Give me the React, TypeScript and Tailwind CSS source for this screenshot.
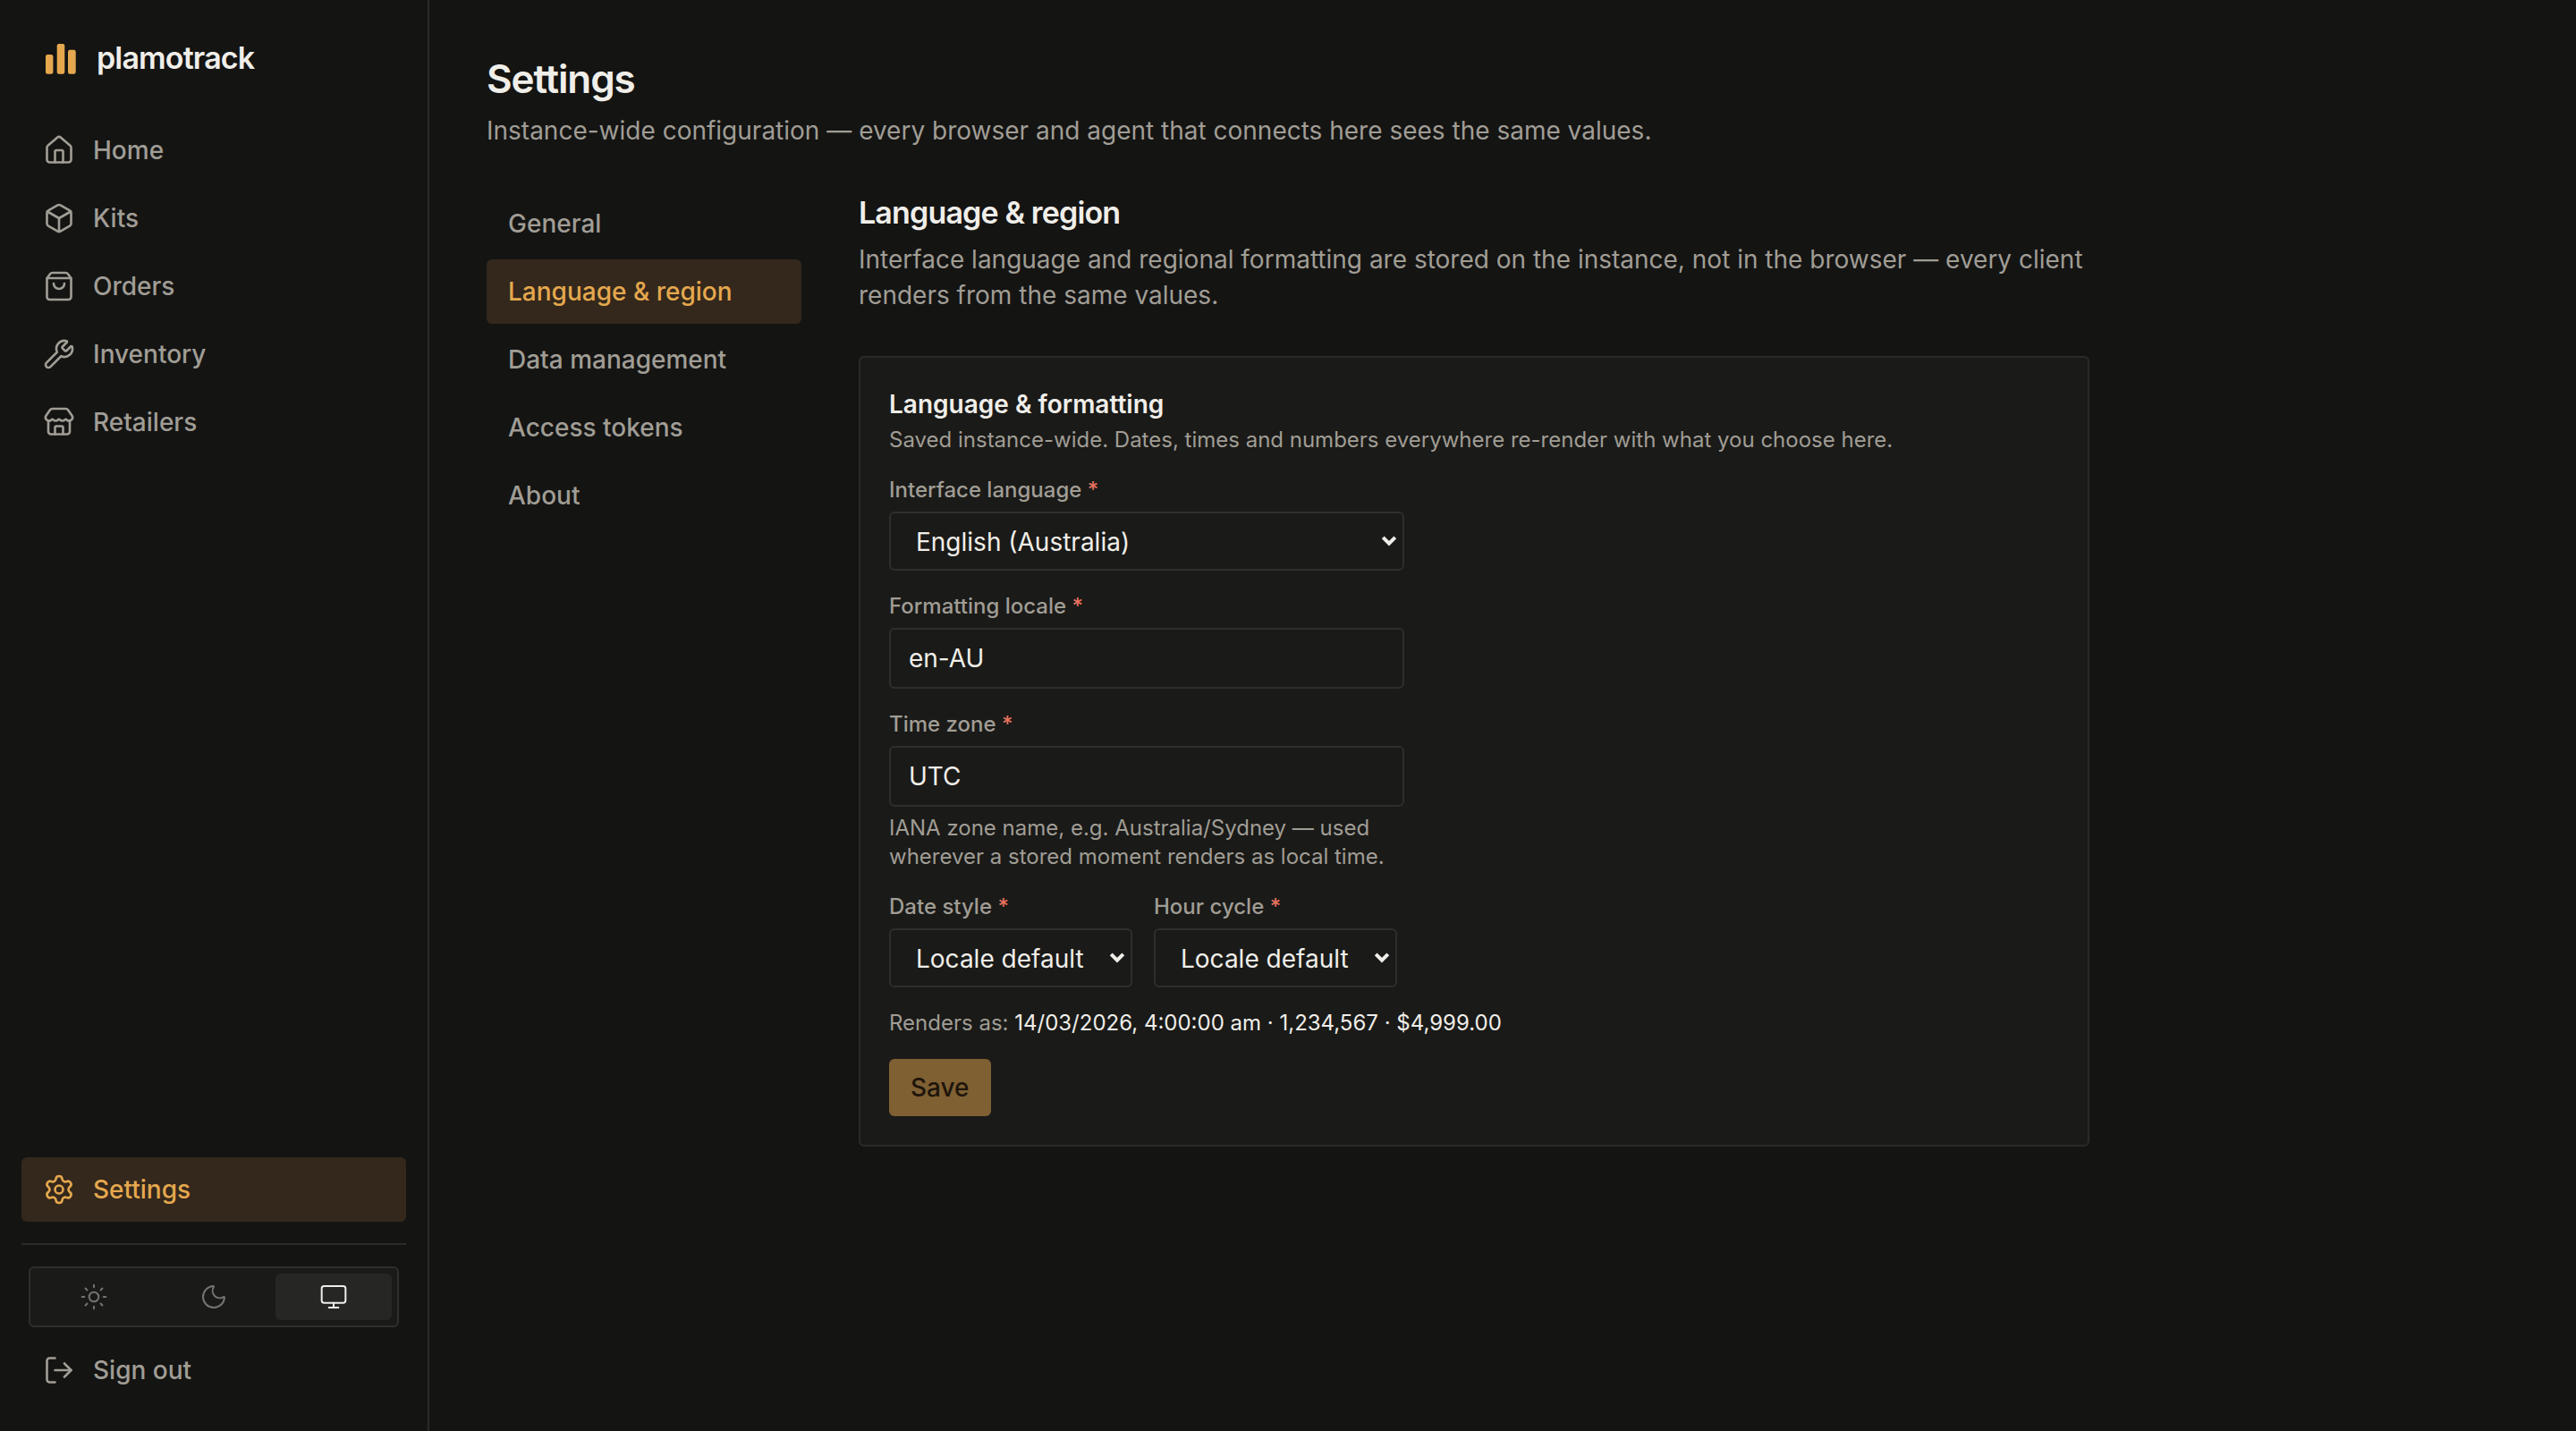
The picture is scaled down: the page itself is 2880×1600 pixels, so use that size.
import { House, Box, ShoppingBag, Wrench, Store, Settings, Sun, Moon, Monitor, LogOut } from "lucide-react";

const mainNav = [
  { label: "Home", Icon: House },
  { label: "Kits", Icon: Box },
  { label: "Orders", Icon: ShoppingBag },
  { label: "Inventory", Icon: Wrench },
  { label: "Retailers", Icon: Store },
];

const sections = ["General", "Language & region", "Data management", "Access tokens", "About"];

function NavItem({ label, Icon, active }: { label: string; Icon: typeof House; active?: boolean }) {
  return (
    <a
      className={
        active
          ? "flex h-9 items-center gap-2.5 rounded-[3px] bg-[#34281c] px-3 text-sm font-medium text-[#e5a84e]"
          : "flex h-9 items-center gap-2.5 rounded-[3px] px-3 text-sm font-medium text-[#a09d95]"
      }
    >
      <Icon size={18} strokeWidth={1.75} />
      <span>{label}</span>
    </a>
  );
}

function Label({ children }: { children: string }) {
  return (
    <label className="mb-1 block text-xs leading-4 font-medium text-[#a09d95]">
      {children} <span className="text-[#e5705f]">*</span>
    </label>
  );
}

function NativeSelect({ value, className }: { value: string; className: string }) {
  return (
    <div className={`relative ${className}`}>
      <select
        defaultValue={value}
        className="h-[33px] w-full appearance-none rounded-[3px] border border-[#2e2e2b] bg-[#1a1a18] pt-px pr-[26px] pl-[14px] text-sm text-[#f0eee9]"
      >
        <option>{value}</option>
      </select>
      <svg
        width="10"
        height="7"
        viewBox="0 0 10 7"
        fill="none"
        stroke="#f0eee9"
        strokeWidth="2"
        className="pointer-events-none absolute top-[13px] right-[3.5px]"
      >
        <polyline points="1.6,1.4 5,4.8 8.4,1.4" />
      </svg>
    </div>
  );
}

export default function App() {
  return (
    <div className="flex h-[800px] w-[1440px] bg-[#141413] font-['Inter',sans-serif] [zoom:2]">
      <aside className="flex w-60 shrink-0 flex-col border-r border-[#2a2a28] px-3 pb-4">
        <div className="flex h-[66px] items-center gap-2.5 pl-3">
          <svg width="20" height="18" viewBox="0 0 40 36" className="fill-[#e5a84e]">
            <rect x="3" y="13" width="8.4" height="21.8" rx="2.2" />
            <rect x="15.7" y="1" width="8.6" height="33.8" rx="2.2" />
            <rect x="28" y="7.8" width="8.7" height="27" rx="2.2" />
          </svg>
          <span className="mb-0.5 text-[17px] font-semibold tracking-tight text-[#f0eee9]">plamotrack</span>
        </div>
        <nav className="flex flex-col gap-0.5">
          {mainNav.map((n) => (
            <NavItem key={n.label} label={n.label} Icon={n.Icon} />
          ))}
        </nav>
        <div className="mt-auto">
          <NavItem label="Settings" Icon={Settings} active />
          <div className="my-3 h-px bg-[#2a2a28]" />
          <div className="mx-1 flex h-[34px] gap-0.5 rounded-[3px] border border-[#2e2e2b] bg-[#1a1a18] p-[3px]">
            <button className="flex flex-1 items-center justify-center rounded-[3px] text-[#757470]">
              <Sun size={16} strokeWidth={1.5} />
            </button>
            <button className="flex flex-1 items-center justify-center rounded-[3px] text-[#757470]">
              <Moon size={16} strokeWidth={1.5} />
            </button>
            <button className="flex flex-1 items-center justify-center rounded-[3px] bg-[#262624] text-[#f0eee9]">
              <Monitor size={16} strokeWidth={1.5} />
            </button>
          </div>
          <div className="mt-1.5">
            <NavItem label="Sign out" Icon={LogOut} />
          </div>
        </div>
      </aside>

      <main className="flex-1 pl-8 pt-7">
        <div className="w-[896px]">
          <h1 className="text-[22px] leading-8 font-semibold tracking-tight text-[#f0eee9]">Settings</h1>
          <p className="mt-[3px] text-sm text-[#a09d95]">
            Instance-wide configuration — every browser and agent that connects here sees the same values.
          </p>
          <div className="mt-[22px] flex gap-8">
            <nav className="flex w-44 shrink-0 flex-col gap-0.5 pt-[2px]">
              {sections.map((s) => (
                <a
                  key={s}
                  className={
                    s === "Language & region"
                      ? "flex h-9 items-center rounded-[3px] bg-[#34281c] px-3 text-sm font-medium text-[#e5a84e]"
                      : "flex h-9 items-center rounded-[3px] px-3 text-sm font-medium text-[#a09d95]"
                  }
                >
                  {s}
                </a>
              ))}
            </nav>
            <section className="min-w-0 flex-1">
              <h2 className="text-[17px] leading-7 font-semibold tracking-tight text-[#f0eee9]">Language &amp; region</h2>
              <p className="mt-0.5 text-sm text-[#a09d95]">
                Interface language and regional formatting are stored on the instance, not in the browser — every client renders from the same values.
              </p>
              <form className="mt-6 flex flex-col gap-3 rounded-[3px] border border-[#2a2a28] bg-[#1a1a18] p-4">
                <div>
                  <h3 className="text-sm leading-5 font-semibold text-[#f0eee9]">Language &amp; formatting</h3>
                  <p className="mt-0.5 text-xs leading-4 text-[#a09d95]">
                    Saved instance-wide. Dates, times and numbers everywhere re-render with what you choose here.
                  </p>
                </div>
                <div>
                  <Label>Interface language</Label>
                  <NativeSelect value="English (Australia)" className="w-72" />
                </div>
                <div>
                  <Label>Formatting locale</Label>
                  <input
                    defaultValue="en-AU"
                    className="h-[34px] w-72 rounded-[3px] border border-[#2e2e2b] bg-[#1a1a18] px-2.5 text-sm text-[#f0eee9] outline-none"
                  />
                </div>
                <div>
                  <Label>Time zone</Label>
                  <input
                    defaultValue="UTC"
                    className="h-[34px] w-72 rounded-[3px] border border-[#2e2e2b] bg-[#1a1a18] px-2.5 text-sm text-[#f0eee9] outline-none"
                  />
                  <p className="mt-1 w-72 text-xs leading-4 text-[#a09d95]">
                    IANA zone name, e.g. Australia/Sydney — used wherever a stored moment renders as local time.
                  </p>
                </div>
                <div className="flex gap-3">
                  <div>
                    <Label>Date style</Label>
                    <NativeSelect value="Locale default" className="w-fit" />
                  </div>
                  <div>
                    <Label>Hour cycle</Label>
                    <NativeSelect value="Locale default" className="w-fit" />
                  </div>
                </div>
                <p className="text-xs leading-4 text-[#a09d95]">
                  Renders as: <span className="text-[#f0eee9]">14/03/2026, 4:00:00 am · 1,234,567 · $4,999.00</span>
                </p>
                <button type="button" className="h-8 w-fit rounded-[3px] bg-[#7f6033] px-3 text-sm font-medium text-[#1e150b]">
                  Save
                </button>
              </form>
            </section>
          </div>
        </div>
      </main>
    </div>
  );
}
